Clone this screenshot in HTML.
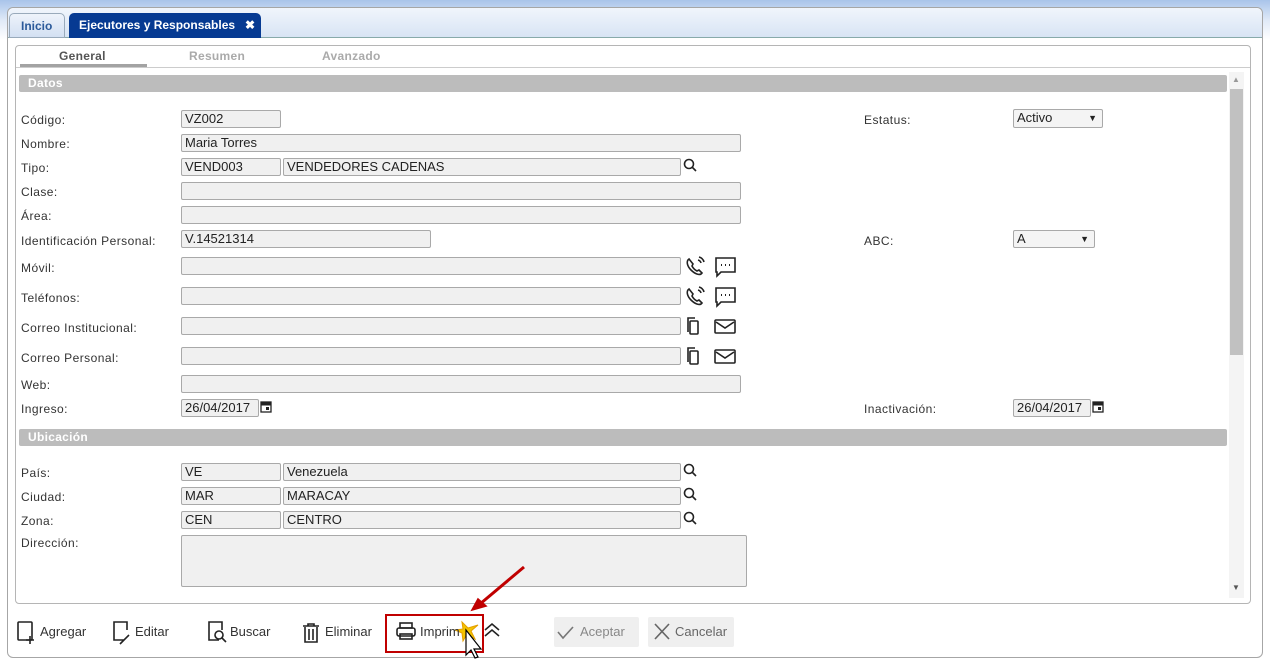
<!DOCTYPE html>
<html><head><meta charset="utf-8"><style>
*{box-sizing:border-box;margin:0;padding:0}
body{width:1270px;height:661px;overflow:hidden;background:#fff;font-family:"Liberation Sans",Arial,sans-serif;font-size:12px;color:#333;position:relative}
.a{position:absolute}
.top{left:0;top:0;width:1270px;height:661px;background:linear-gradient(#a9c4ea,#dfe9f7 20px,#fff 40px)}
.panel{left:7px;top:7px;width:1256px;height:651px;border:1px solid #a6a6a6;border-radius:6px;background:#fff}
.tabbar{left:8px;top:8px;width:1254px;height:30px;background:linear-gradient(#f0f5fc,#d8e4f4);border-bottom:1px solid #8aa;border-radius:6px 6px 0 0}
.tab{top:13px;height:25px;border-radius:5px 5px 0 0;font-weight:bold;font-size:12px;line-height:24px;padding-left:12px}
.inner{left:15px;top:45px;width:1236px;height:559px;border:1px solid #b5b5b5;border-radius:4px}
.sub{top:49px;font-weight:bold;font-size:12px;color:#aaa;letter-spacing:0.3px}
.sec{left:19px;width:1208px;height:17px;background:#bcbcbc;color:#fff;font-weight:bold;font-size:12px;line-height:17px;padding-left:9px;border-radius:2px;letter-spacing:0.3px}
.l{left:21px;font-size:12px;color:#333;letter-spacing:0.45px}
.i{height:18px;background:#f0f0f0;border:1px solid #a9a9a9;border-radius:2px;font-size:13px;line-height:16px;padding-left:3px;color:#222}
.tb{top:624px;font-size:13px;color:#333}
</style></head><body>
<div class="a top"></div>
<div class="a panel"></div>
<div class="a tabbar"></div>
<div class="a tab" style="left:9px;width:56px;background:linear-gradient(#eef3fb,#d3e0f2);border:1px solid #9ab;color:#2b5a9a;padding-left:11px">Inicio</div>
<div class="a tab" style="left:69px;width:192px;background:#063a92;color:#fff;padding-left:10px">Ejecutores y Responsables<span style="position:absolute;left:176px;font-size:12px">✖</span></div>
<div class="a inner"></div>
<div class="a sub" style="left:59px;color:#555">General</div>
<div class="a" style="left:20px;top:64px;width:127px;height:3px;background:#a3a3a3"></div>
<div class="a" style="left:16px;top:67px;width:1234px;height:1px;background:#ccc"></div>
<div class="a sub" style="left:189px">Resumen</div>
<div class="a sub" style="left:322px">Avanzado</div>
<div class="a" style="left:1229px;top:72px;width:15px;height:526px;background:#f4f4f4"></div>
<div class="a" style="left:1230px;top:89px;width:13px;height:266px;background:#c1c1c1"></div>
<div class="a" style="left:1232px;top:75px;font-size:8px;color:#999">▲</div>
<div class="a" style="left:1232px;top:583px;font-size:8px;color:#555">▼</div>

<div class="a sec" style="top:75px">Datos</div>
<div class="a l" style="top:113px">Código:</div><div class="a i" style="left:181px;top:110px;width:100px">VZ002</div>
<div class="a l" style="top:137px">Nombre:</div><div class="a i" style="left:181px;top:134px;width:560px">Maria Torres</div>
<div class="a l" style="top:161px">Tipo:</div><div class="a i" style="left:181px;top:158px;width:100px">VEND003</div><div class="a i" style="left:283px;top:158px;width:398px">VENDEDORES CADENAS</div>
<div class="a l" style="top:185px">Clase:</div><div class="a i" style="left:181px;top:182px;width:560px"></div>
<div class="a l" style="top:209px">Área:</div><div class="a i" style="left:181px;top:206px;width:560px"></div>
<div class="a l" style="top:234px">Identificación Personal:</div><div class="a i" style="left:181px;top:230px;width:250px">V.14521314</div>
<div class="a l" style="top:261px">Móvil:</div><div class="a i" style="left:181px;top:257px;width:500px"></div>
<div class="a l" style="top:291px">Teléfonos:</div><div class="a i" style="left:181px;top:287px;width:500px"></div>
<div class="a l" style="top:321px">Correo Institucional:</div><div class="a i" style="left:181px;top:317px;width:500px"></div>
<div class="a l" style="top:351px">Correo Personal:</div><div class="a i" style="left:181px;top:347px;width:500px"></div>
<div class="a l" style="top:378px">Web:</div><div class="a i" style="left:181px;top:375px;width:560px"></div>
<div class="a l" style="top:402px">Ingreso:</div><div class="a i" style="left:181px;top:399px;width:78px">26/04/2017</div>

<div class="a l" style="left:864px;top:113px">Estatus:</div>
<div class="a i" style="left:1013px;top:109px;width:90px;height:19px;background:#f4f4f4">Activo<span style="position:absolute;right:5px;font-size:9px">▼</span></div>
<div class="a l" style="left:864px;top:234px">ABC:</div>
<div class="a i" style="left:1013px;top:230px;width:82px;background:#f4f4f4">A<span style="position:absolute;right:5px;font-size:9px">▼</span></div>
<div class="a l" style="left:864px;top:402px">Inactivación:</div><div class="a i" style="left:1013px;top:399px;width:78px">26/04/2017</div>

<div class="a sec" style="top:429px">Ubicación</div>
<div class="a l" style="top:466px">País:</div><div class="a i" style="left:181px;top:463px;width:100px">VE</div><div class="a i" style="left:283px;top:463px;width:398px">Venezuela</div>
<div class="a l" style="top:490px">Ciudad:</div><div class="a i" style="left:181px;top:487px;width:100px">MAR</div><div class="a i" style="left:283px;top:487px;width:398px">MARACAY</div>
<div class="a l" style="top:514px">Zona:</div><div class="a i" style="left:181px;top:511px;width:100px">CEN</div><div class="a i" style="left:283px;top:511px;width:398px">CENTRO</div>
<div class="a l" style="top:536px">Dirección:</div><div class="a i" style="left:181px;top:535px;width:566px;height:52px"></div>

<div class="a" style="left:554px;top:617px;width:85px;height:30px;background:#efefef;border-radius:2px"></div>
<div class="a" style="left:648px;top:617px;width:86px;height:30px;background:#efefef;border-radius:2px"></div>

<svg class="a" style="left:0;top:0" width="1270" height="661" fill="none" stroke="#222" stroke-width="1.6">
<g id="s"><circle cx="689" cy="164" r="4.5"/><path d="M692 167l4 4"/></g>
<use href="#s" y="305"/><use href="#s" y="329"/><use href="#s" y="353"/>
<g id="ph"><path d="M689 259c-3 2-2 7 2 11s9 6 11 3l-3-3-2 1c-2-1-4-3-5-5l1-2z"/><path d="M698 260a4 4 0 0 1 3 3M699 257a7 7 0 0 1 5 5"/>
<path d="M716 258h19v14h-14l-4 4v-4h-1z"/><path d="M721 265h1M725 265h1M729 265h1" stroke-width="2"/></g>
<use href="#ph" y="30"/>
<g id="em"><rect x="690" y="321" width="8" height="13" rx="1"/><path d="M688 332v-14h7"/><rect x="715" y="320" width="20" height="13" rx="1"/><path d="M716 322l9 6 9-6"/></g>
<use href="#em" y="30"/>
<g id="cal"><rect x="261" y="402" width="10" height="10" stroke-width="1.3"/><path d="M261 404h10" stroke-width="3"/><rect x="266" y="407" width="3" height="3" fill="#222" stroke="none"/></g>
<use href="#cal" x="832"/>
<rect x="18" y="622" width="14" height="18" rx="1"/><path d="M30 636v8M26 640h8"/>
<path d="M124 640h-10v-18h13v8M120 644l9-9"/>
<path d="M219 640h-10v-18h13v8"/><circle cx="219" cy="635" r="4"/><path d="M222 638l4 4"/>
<path d="M303 626h16M308 626v-2h6v2M305 627v15h12v-15M309 629v11M313 629v11"/>
<rect x="400" y="623" width="12" height="5"/><rect x="397" y="628" width="18" height="8" rx="2"/><rect x="400" y="634" width="12" height="5"/>
<path d="M485 630l7-6 7 6M485 636l7-6 7 6"/>
<path d="M558 632l5 6 10-11" stroke="#777"/>
<path d="M655 624l14 15M669 624l-14 15" stroke="#666"/>
<rect x="386" y="615" width="97" height="37" stroke="#c00000" stroke-width="2"/>
<path d="M524 567l-44 37" stroke="#c00000" stroke-width="3"/><path d="M472 610l14-4-8-7z" fill="#c00000" stroke="#c00000"/>
<path d="M462 622l6 6 10-3-7 6 4 8-8-5-4 7-1-8-7-3 8-1z" fill="#f5c400" stroke="#e5a000" stroke-width="1"/>
<path d="M466 630v25l5-5 4 8 3-1-4-8h7z" fill="#fff" stroke="#000" stroke-width="1.2"/>
</svg>
<div class="a tb" style="left:40px">Agregar</div>
<div class="a tb" style="left:135px">Editar</div>
<div class="a tb" style="left:230px">Buscar</div>
<div class="a tb" style="left:325px">Eliminar</div>
<div class="a tb" style="left:420px">Imprim</div>
<div class="a tb" style="left:580px;color:#888">Aceptar</div>
<div class="a tb" style="left:675px;color:#666">Cancelar</div>
</body></html>
